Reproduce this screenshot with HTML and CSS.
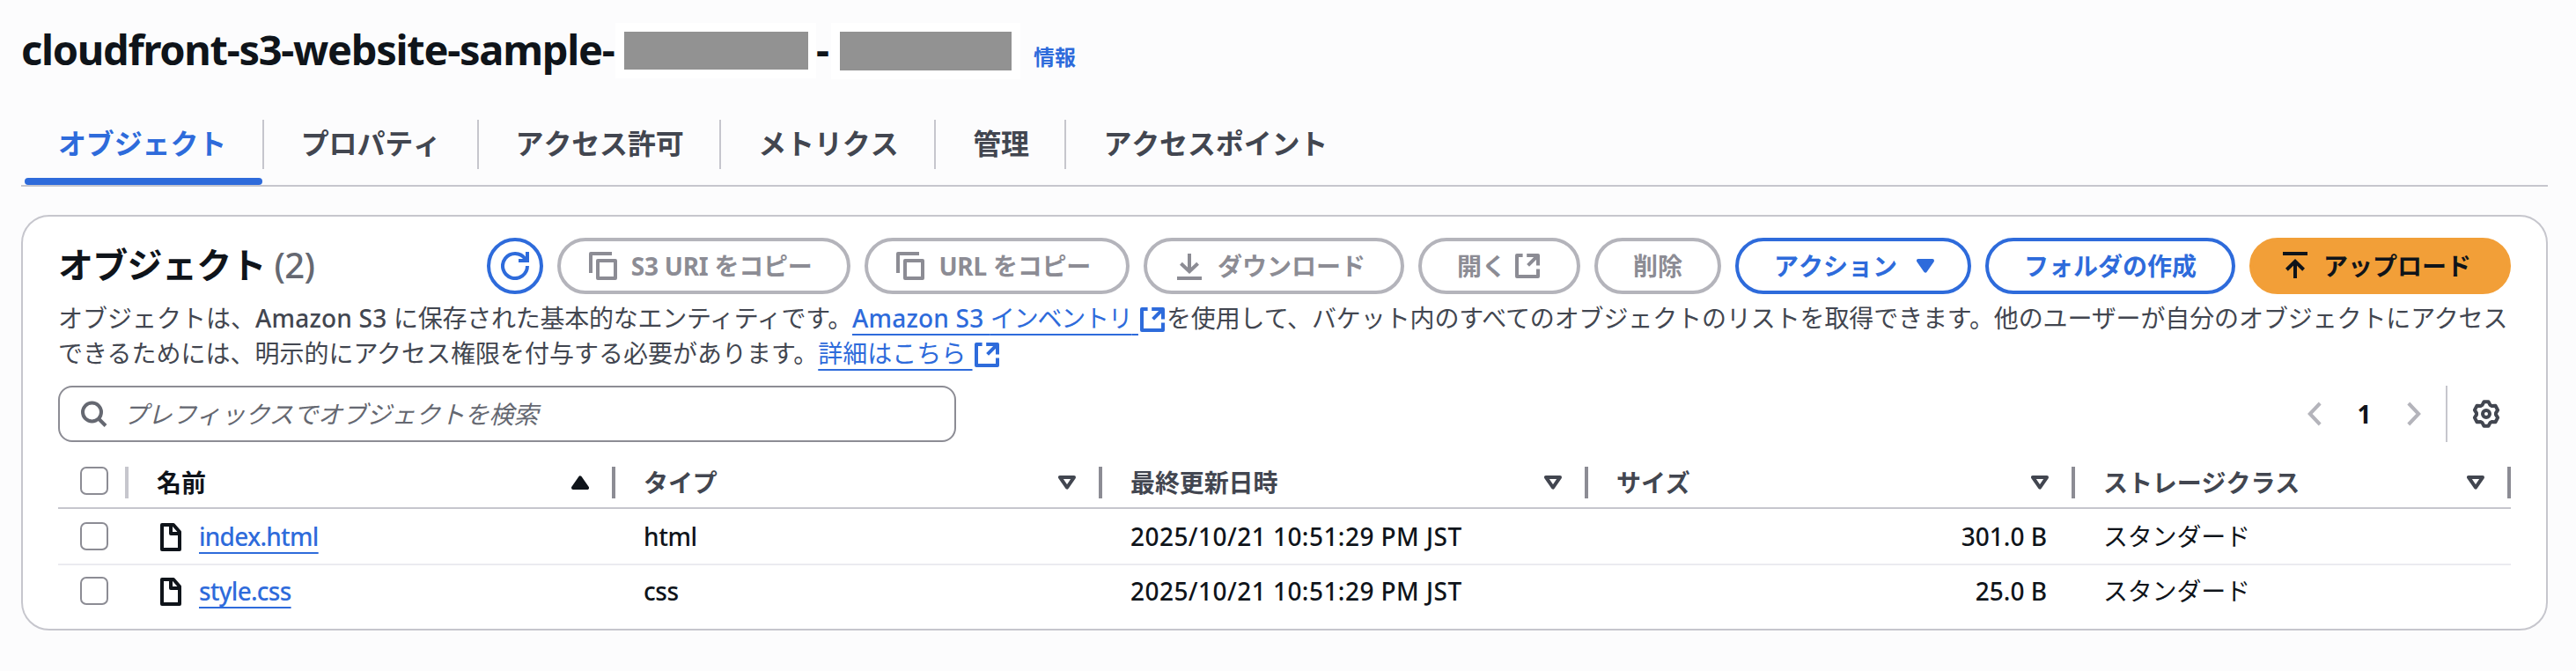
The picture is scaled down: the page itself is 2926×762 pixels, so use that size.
FILE: index.html
```html
<!DOCTYPE html>
<html lang="ja">
<head>
<meta charset="utf-8">
<title>S3 オブジェクト</title>
<link rel="stylesheet" href="styles.css">
</head>
<body>
<svg class="defs" aria-hidden="true">
  <symbol id="external" viewBox="0 0 32 32"><path d="M10.6 4H4v24h24v-8.4M15.2 4H28v11.4M16.6 15.4 27.5 4.5"/></symbol>
  <symbol id="copy" viewBox="0 0 32 32"><path d="M26 2H2v22M10 10h20v20H10z"/></symbol>
  <symbol id="sort" viewBox="0 0 20 16"><path d="M2 2h16l-8 11.6z"/></symbol>
  <symbol id="file" viewBox="0 0 24 32"><path d="M2 2h13l7 8v20H2zM12 2v10h10"/></symbol>
</svg>

<header class="title-bar">
  <h1 class="title">cloudfront-s3-website-sample-</h1>
  <span class="mask mask-account"></span>
  <span class="title dash">-</span>
  <span class="mask mask-region"></span>
  <a class="info">情報</a>
</header>

<nav class="tabs">
  <a class="tab active">オブジェクト</a>
  <a class="tab">プロパティ</a>
  <a class="tab">アクセス許可</a>
  <a class="tab">メトリクス</a>
  <a class="tab">管理</a>
  <a class="tab">アクセスポイント</a>
</nav>

<main class="card">
  <div class="card-head">
    <h2 class="heading">オブジェクト <span class="count">(2)</span></h2>
    <button class="btn round"><svg class="icon" viewBox="0 0 32 32"><path d="M30 16A14 14 0 1 1 27.6 8.2M30 0v10H20"/></svg></button>
    <button class="btn lead disabled"><svg class="icon"><use href="#copy"/></svg><span class="tight">S3 URI をコピー</span></button>
    <button class="btn lead disabled"><svg class="icon"><use href="#copy"/></svg><span class="tight">URL をコピー</span></button>
    <button class="btn lead disabled"><svg class="icon" viewBox="0 0 32 32"><path d="M16 2v20M6.4 13.2l9.6 9 9.6-9M2 30h28"/></svg>ダウンロード</button>
    <button class="btn trail disabled">開く<svg class="icon"><use href="#external"/></svg></button>
    <button class="btn disabled">削除</button>
    <button class="btn menu">アクション<svg class="caret" viewBox="0 0 20 16"><path d="M2 2h16l-8 11.6z"/></svg></button>
    <button class="btn">フォルダの作成</button>
    <button class="btn lead primary"><svg class="icon" viewBox="0 0 32 32"><path d="M2 2h28M16 30V11M6.4 20.2l9.6-9.4 9.6 9.4"/></svg>アップロード</button>
  </div>

  <p class="description">オブジェクトは、<span class="latin">Amazon S3 </span><span class="first">に保存された基本的なエンティティです。</span><a class="link"><span class="latin">Amazon S3 </span><span class="inventory">インベントリ</span>&nbsp;</a><svg class="icon link-icon"><use href="#external"/></svg><span class="rest">を使用して、バケット内のすべてのオブジェクトのリストを取得できます。他のユーザーが自分のオブジェクトにアクセス</span><br>できるためには、明示的にアクセス権限を付与する必要があります。<a class="link">詳細はこちら&nbsp;</a><svg class="icon link-icon"><use href="#external"/></svg></p>

  <div class="tools">
    <div class="search">
      <svg class="icon" viewBox="0 0 32 32"><circle cx="14.5" cy="14" r="10.5"/><path d="m22 21.500 8 8"/></svg>
      <span class="placeholder">プレフィックスでオブジェクトを検索</span>
    </div>
    <div class="pager">
      <svg class="chevron" viewBox="0 0 16 28"><path d="M14.200 2 2.800 14l11.400 12"/></svg>
      <span class="page">1</span>
      <svg class="chevron" viewBox="0 0 16 28"><path d="M1.800 2l11.400 12L1.800 26"/></svg>
    </div>
    <div class="settings">
      <svg class="icon gear" viewBox="0 0 32 32"><path d="M13.500 2.200h5l2.100 3.900 1.700.9 4.200-.2 2.600 4.800-2.100 3.500v1.800l2.100 3.500-2.600 4.800-4.200-.2-1.700.9-2.100 3.900h-5l-2.100-3.900-1.700-.9-4.200.2-2.600-4.800L5 16.900v-1.800l-2.100-3.500 2.600-4.800 4.200.2 1.700-.9z"/><circle cx="16" cy="16" r="4"/></svg>
    </div>
  </div>

  <div class="table">
    <div class="row head">
      <div class="cell select"><span class="checkbox"></span></div>
      <div class="cell sorted"><span class="label">名前</span><svg class="sort ascending"><use href="#sort"/></svg></div>
      <div class="cell"><span class="label">タイプ</span><svg class="sort"><use href="#sort"/></svg></div>
      <div class="cell"><span class="label">最終更新日時</span><svg class="sort"><use href="#sort"/></svg></div>
      <div class="cell"><span class="label">サイズ</span><svg class="sort"><use href="#sort"/></svg></div>
      <div class="cell"><span class="label">ストレージクラス</span><svg class="sort"><use href="#sort"/></svg></div>
    </div>
    <div class="row">
      <div class="cell select"><span class="checkbox"></span></div>
      <div class="cell"><svg class="file"><use href="#file"/></svg><a class="link name">index.html</a></div>
      <div class="cell kind">html</div>
      <div class="cell date">2025/10/21 10:51:29 PM JST</div>
      <div class="cell size">301.0 B</div>
      <div class="cell storage">スタンダード</div>
    </div>
    <div class="row last">
      <div class="cell select"><span class="checkbox"></span></div>
      <div class="cell"><svg class="file"><use href="#file"/></svg><a class="link name">style.css</a></div>
      <div class="cell kind">css</div>
      <div class="cell date">2025/10/21 10:51:29 PM JST</div>
      <div class="cell size">25.0 B</div>
      <div class="cell storage">スタンダード</div>
    </div>
  </div>
</main>
</body>
</html>
```
FILE: styles.css
```css
:root {
  --blue: #2e6bdb;
  --ink: #0f141a;
  --text: #424650;
  --line: #c6c6cd;
  --muted: #8c8c94;
}

* { box-sizing: border-box; }

body {
  margin: 0;
  padding: 0 32px 0 24px;
  height: 762px;
  overflow: hidden;
  background: #fcfcfd;
  color: var(--ink);
  font: 28px/40px "Noto Sans", "Noto Sans CJK JP", sans-serif;
}

svg {
  flex: none;
  fill: none;
  stroke: currentColor;
  stroke-width: 4;
}

.defs { display: none; }
.icon { width: 32px; height: 32px; }
#external, #sort, #file, #copy, .caret, .gear { stroke-linejoin: round; }

/* Title */
.title-bar {
  display: flex;
  align-items: flex-start;
  height: 120px;
  padding-top: 26px;
}
.title {
  width: 675px;
  margin: 0;
  font-size: 47px;
  font-weight: 700;
  line-height: 60px;
  letter-spacing: -1.28px;
  white-space: nowrap;
}
.dash { width: 17px; }
.mask {
  height: 63px;
  border: 10px solid #fff;
  background: #929292;
}
.mask-account { width: 228px; border-right-width: 9px; }
.mask-region { width: 215px; height: 64px; }
.info {
  margin: 24px 0 0 15px;
  color: var(--blue);
  font-size: 24px;
  font-weight: 700;
  line-height: 30px;
}

/* Tabs */
.tabs {
  display: flex;
  height: 92px;
  padding-top: 16px;
  border-bottom: 2px solid var(--line);
}
.tab {
  position: relative;
  height: 56px;
  padding: 0 40.6px 0 42px;
  border-right: 2px solid var(--line);
  color: var(--text);
  font-size: 32px;
  font-weight: 700;
  line-height: 54px;
  letter-spacing: -0.15px;
  font-kerning: none;
}
.tab:last-child { border-right: 0; }
.active { color: var(--blue); }
.active::after {
  content: "";
  position: absolute;
  left: 4px;
  right: 0;
  bottom: -18px;
  height: 8px;
  border-radius: 4px;
  background: var(--blue);
}

/* Card */
.card {
  height: 472px;
  margin-top: 32px;
  padding: 24px 40px 0;
  border: 2px solid var(--line);
  border-radius: 32px;
  background: #fff;
}
.card-head {
  display: flex;
  gap: 16px;
  height: 64px;
}
.heading {
  flex: 1;
  margin: 0;
  font-size: 40px;
  line-height: 62px;
  white-space: nowrap;
  font-kerning: none;
  letter-spacing: -0.7px;
}
.count { color: #656871; font-weight: 500; }

.btn {
  display: flex;
  align-items: center;
  height: 64px;
  padding: 0 40px;
  border: 4px solid var(--blue);
  border-radius: 32px;
  background: #fff;
  color: var(--blue);
  font: 700 28px/54px "Noto Sans", "Noto Sans CJK JP", sans-serif;
  font-kerning: none;
  white-space: nowrap;
}
.lead { gap: 16px; padding-left: 32px; }
.trail { gap: 8px; }
.menu { gap: 22px; padding-right: 38px; }
.round { width: 64px; padding: 0 12px; }
.disabled { border-color: #b4b4bb; color: var(--muted); }
.primary {
  padding-right: 41px;
  border-color: #f29f38;
  background: #f29f38;
  color: var(--ink);
}
.tight { letter-spacing: -0.25px; }
.caret { width: 20px; height: 16px; fill: currentColor; }

.description {
  height: 80px;
  margin: 7px 0 17px;
  color: var(--text);
  white-space: nowrap;
}
.latin { font-weight: 500; letter-spacing: 0.2px; }
.first { letter-spacing: -0.25px; }
.inventory { letter-spacing: -1.2px; }
.rest { letter-spacing: -0.12px; }
.link {
  color: var(--blue);
  text-decoration: underline;
  text-decoration-thickness: 2px;
  text-underline-offset: 7px;
  text-decoration-skip-ink: none;
}
.link-icon { margin-bottom: -7px; color: var(--blue); }

/* Search and paging */
.tools {
  display: flex;
  align-items: center;
  height: 64px;
}
.search {
  display: flex;
  align-items: center;
  gap: 18px;
  width: 1020px;
  height: 64px;
  margin-right: auto;
  padding-left: 22px;
  border: 2px solid var(--muted);
  border-radius: 16px;
  color: #656871;
}
.placeholder { font-style: italic; letter-spacing: -0.2px; }
.pager {
  display: flex;
  align-items: center;
  color: #b4b4bb;
}
.chevron { width: 16px; height: 28px; }
.page {
  width: 97px;
  color: var(--ink);
  font-weight: 700;
  text-align: center;
}
.settings {
  display: flex;
  align-items: center;
  width: 74px;
  height: 64px;
  margin-left: 28px;
  padding-left: 28px;
  border-left: 2px solid var(--line);
  color: var(--text);
}

/* Table */
.table { padding-top: 18px; }
.row {
  display: grid;
  grid-template-columns: 80px 553px 553px 552px 553px 495px;
  height: 64px;
  border-bottom: 2px solid #ebebf0;
}
.last { height: 58px; border-bottom: 0; }
.cell {
  display: flex;
  align-items: center;
  padding: 0 32px;
  white-space: nowrap;
}
.select { padding: 0 0 0 25px; }
.checkbox {
  width: 32px;
  height: 32px;
  border: 2px solid var(--muted);
  border-radius: 7px;
}
.head { height: 58px; border-color: var(--line); }
.head .cell {
  height: 36px;
  margin-top: 10px;
  padding-right: 26px;
  border-right: 4px solid var(--muted);
  color: var(--text);
  font-weight: 700;
  font-kerning: none;
}
.head .select { align-items: flex-start; padding-right: 0; border-color: var(--line); }
.head .sorted { color: var(--ink); }
.label { flex: 1; line-height: 34px; letter-spacing: -0.1px; }
.sort { width: 20px; height: 16px; }
.ascending { transform: rotate(180deg); fill: currentColor; }
.file { width: 24px; height: 32px; margin: 2px 20px 0 4px; }
.name, .kind, .date, .size { font-weight: 500; }
.name { letter-spacing: -0.75px; }
.kind { letter-spacing: -0.4px; }
.date { letter-spacing: 0.45px; }
.size { justify-content: flex-end; letter-spacing: 0; }
.storage { letter-spacing: -0.2px; }
```
